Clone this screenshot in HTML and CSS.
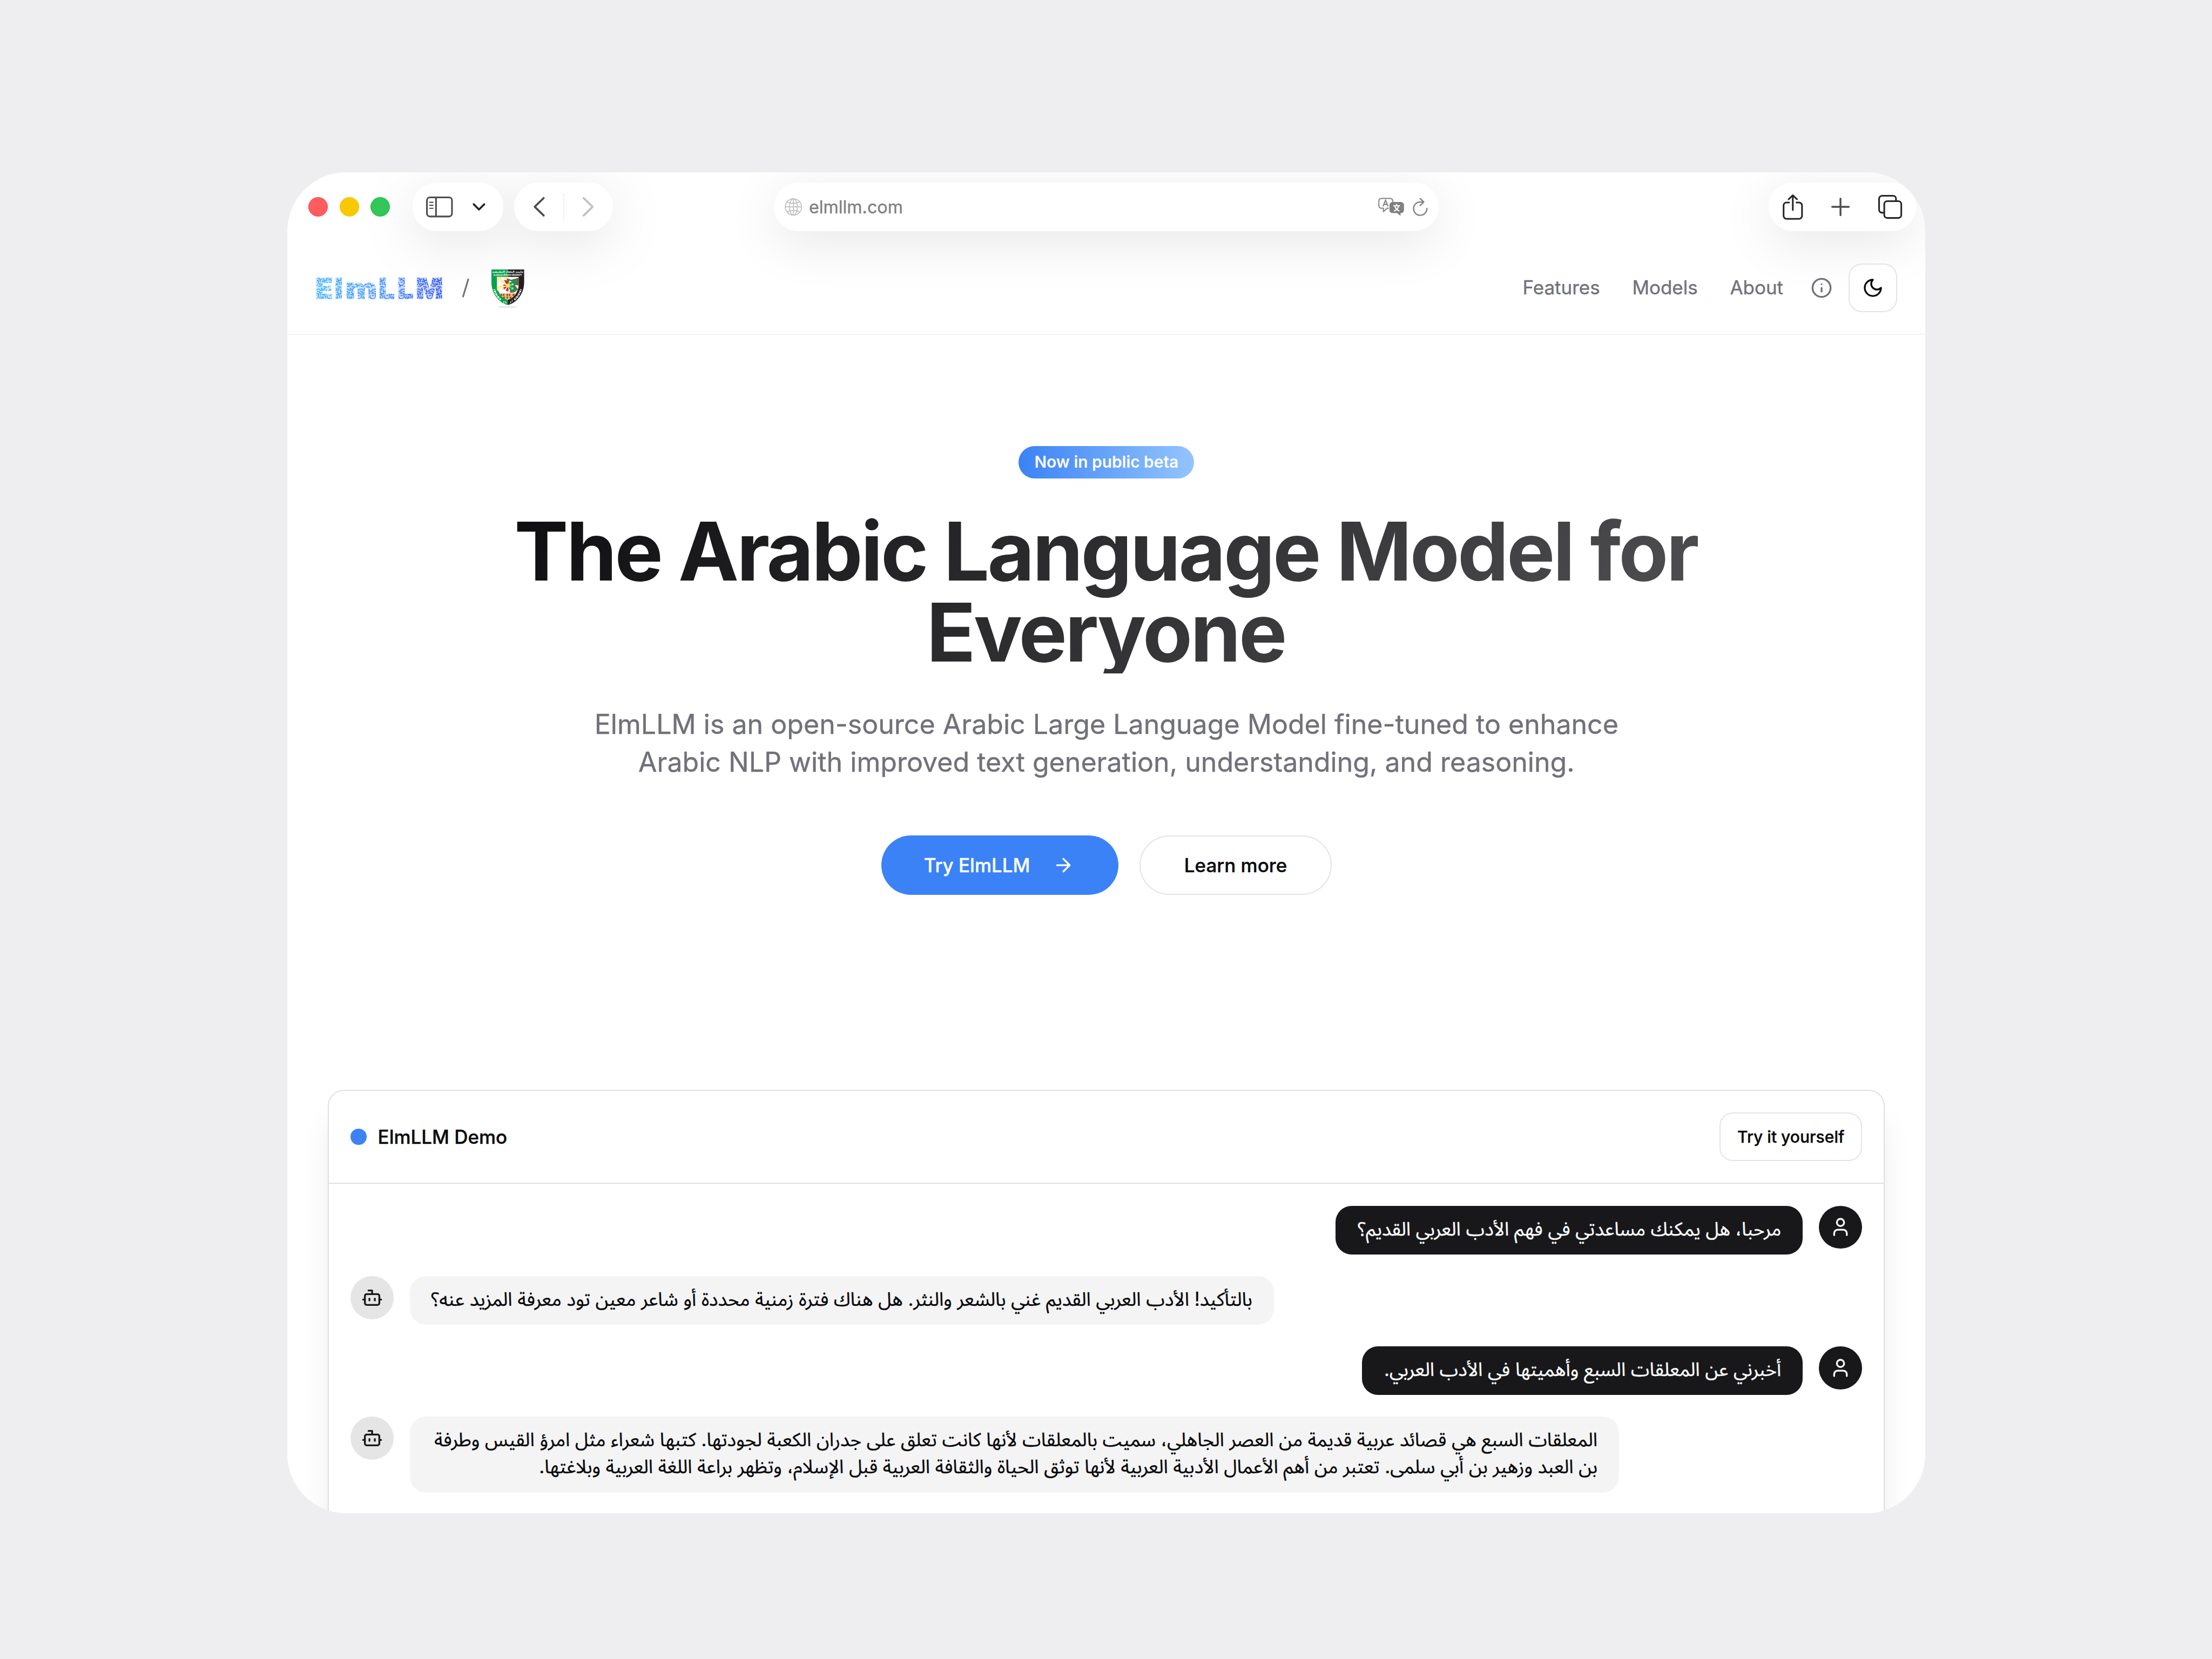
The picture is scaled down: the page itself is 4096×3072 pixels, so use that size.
FILE: index.html
```html
<!DOCTYPE html>
<html lang="en">
<head>
<meta charset="utf-8">
<title>ElmLLM</title>
<link rel="stylesheet" href="styles.css">
</head>
<body>
<svg class="defs" aria-hidden="true">
  <symbol id="bot" viewBox="0 0 24 24"><path d="M12 8V4H8"/><rect x="4" y="8" width="16" height="12" rx="2"/><path d="M2 14h2M20 14h2M15 13v2M9 13v2"/></symbol>
  <symbol id="user" viewBox="0 0 24 24"><path d="M19 21v-2a4 4 0 0 0-4-4H9a4 4 0 0 0-4 4v2"/><circle cx="12" cy="7" r="4"/></symbol>
</svg>
<div class="window">
  <div class="toolbar">
    <div class="lights"><i class="light red"></i><i class="light yellow"></i><i class="light green"></i></div>
    <div class="pills">
      <div class="pill pill-sidebar">
        <svg class="i-sidebar" viewBox="0 0 58 45"><g fill="none" stroke="#4c4c4c" stroke-width="3.6"><rect x="1.8" y="1.8" width="54.4" height="41.4" rx="6.5"/><path d="M21.5 2v41"/></g><path d="M8 12.500h7M8 19h7M8 25.500h7" stroke="#4c4c4c" stroke-width="2.600" stroke-linecap="round"/></svg>
        <svg class="i-chevron" viewBox="0 0 28 17"><path d="M2.500 2.500 14 14 25.500 2.500" fill="none" stroke="#262626" stroke-width="4.200" stroke-linecap="round" stroke-linejoin="round"/></svg>
      </div>
      <div class="pill pill-nav">
        <svg class="i-arrow" viewBox="0 0 24 42"><path d="M22 2 2.500 21 22 40" fill="none" stroke="#4c4c4c" stroke-width="4.300" stroke-linecap="round" stroke-linejoin="round"/></svg>
        <i class="divider"></i>
        <svg class="i-arrow" viewBox="0 0 24 42"><path d="M2 2 21.500 21 2 40" fill="none" stroke="#bfbfbf" stroke-width="4.300" stroke-linecap="round" stroke-linejoin="round"/></svg>
      </div>
    </div>
    <div class="pill url">
      <svg class="i-globe" viewBox="0 0 38 38"><g fill="none" stroke="#bfbfbf" stroke-width="2"><circle cx="19" cy="19" r="17.800"/><ellipse cx="19" cy="19" rx="8.500" ry="17.800"/><path d="M19 1v36M1 19h36M5 8c8 4.500 20 4.500 28 0M5 30c8-4.500 20-4.500 28 0"/></g></svg>
      <span class="host">elmllm.com</span>
      <svg class="i-translate" viewBox="0 0 58 41"><path d="M7 1.500h19a5.500 5.500 0 0 1 5.500 5.500v3M23 23h-3.500l-8 7v-7H7A5.500 5.500 0 0 1 1.500 17.500V7A5.500 5.500 0 0 1 7 1.500" fill="none" stroke="#8e8e8e" stroke-width="2.600"/><path d="M10.500 19 16 5.500 21.500 19M12.500 14.500h7" fill="none" stroke="#808080" stroke-width="2.400"/><path d="M31 9.500h18.500a6.500 6.500 0 0 1 6.500 6.500v11a6.500 6.500 0 0 1-6.500 6.500H48.500v6.200l-7.500-6.200h-10a6.500 6.500 0 0 1-6.500-6.500V16a6.500 6.500 0 0 1 6.500-6.500z" fill="#808080"/><path d="M33 17.500h14.500M40 13.500v4M36 18c1.500 5 5 9 10 11M44.500 18c-1.500 5-5 9-10 11" fill="none" stroke="#fff" stroke-width="2.400"/></svg>
      <svg class="i-reload" viewBox="0 0 33 41"><path d="M30.800 23.500A14.500 14.500 0 1 1 16.500 9.300h6" fill="none" stroke="#808080" stroke-width="2.800" stroke-linecap="round"/><path d="M16 2l8 7.500-8 7.500" fill="none" stroke="#808080" stroke-width="2.800" stroke-linecap="round" stroke-linejoin="round"/></svg>
    </div>
    <div class="pill actions">
      <svg class="i-share" viewBox="0 0 44 55"><path d="M14 17.500H8.500A6.500 6.500 0 0 0 2 24v22.500A6.500 6.500 0 0 0 8.500 53h27a6.500 6.500 0 0 0 6.500-6.500V24a6.500 6.500 0 0 0-6.500-6.500H30M22 34V2.500M13 10.500l9-8.500 9 8.500" fill="none" stroke="#262626" stroke-width="3.600" stroke-linecap="round" stroke-linejoin="round"/></svg>
      <svg class="i-plus" viewBox="0 0 40 40"><path d="M20 2v36M2 20h36" fill="none" stroke="#4c4c4c" stroke-width="4" stroke-linecap="round"/></svg>
      <svg class="i-tabs" viewBox="0 0 52 52"><g fill="none" stroke="#262626" stroke-width="3.600"><rect x="13" y="13.500" width="37" height="36.500" rx="6.500"/><path d="M12.500 38.500H8A6.200 6.200 0 0 1 1.800 32.300V8.300A6.500 6.500 0 0 1 8.300 1.800h24A6.200 6.200 0 0 1 38.500 8v5"/></g></svg>
    </div>
  </div>

  <header class="site-header">
    <svg class="logo" viewBox="0 0 280 60">
      <defs>
        <linearGradient id="ink" gradientUnits="userSpaceOnUse" x1="0" y1="0" x2="280" y2="0"><stop offset="0" stop-color="#38adff"/><stop offset=".5" stop-color="#3688f8"/><stop offset="1" stop-color="#2448fb"/></linearGradient>
        <pattern id="maze" width="31" height="29" patternUnits="userSpaceOnUse"><rect width="31" height="29" fill="#3c3c3c"/><path d="M0 3h5l3 3h5M10 0v3h6l2-3M0 8h4l3 4v5M12 9l4 4h5M20 3v5h5l3-4h3M24 12h7M28 8v4M10 15h5l3 3v5M0 13h3v6l4 4M22 16v5l4 3h5M26 17h5M2 26h6l3-4h4M13 27h6l3 2M25 28v-3M10 20l-3 0M15 5v3M0 22h2M9 9v3M21 10v4M13 18v5" fill="none" stroke="#fff" stroke-width="2.200"/></pattern>
        <mask id="weave" maskUnits="userSpaceOnUse" x="-10" y="0" width="300" height="60"><rect x="-10" width="300" height="60" fill="url(#maze)"/></mask>
      </defs>
      <g mask="url(#weave)"><text class="logo-text" y="53" fill="url(#ink)" stroke="url(#ink)" stroke-width="1.500"><tspan x="-3.500">E</tspan><tspan x="38">l</tspan><tspan x="61.500" textLength="69" lengthAdjust="spacingAndGlyphs">m</tspan><tspan x="133.500">L</tspan><tspan x="174.500">L</tspan><tspan x="214.500">M</tspan></text></g>
    </svg>
    <svg class="slash" viewBox="0 0 17 43"><path d="M14.500 1.500 2.500 41.500" stroke="#71717a" stroke-width="3.600"/></svg>
    <svg class="crest" viewBox="0 0 71 84">
      <path d="M0 0h35.500v77C14 72 0 50 0 28z" fill="#0aa24e"/><path d="M35.500 0H71v28c0 22-14 44-35.500 49z" fill="#231f20"/>
      <path d="M12 16h47v18c0 14-10 27-23.500 32C22 61 12 48 12 34z" fill="#fff"/>
      <path d="M35 36 12 22v-6h7zM35 36l-9-20h8zM35 36 12 34v12z" fill="#fff3a3"/>
      <path d="M17 52h37c-4 6-10 11-18.500 14C27 63 21 59 17 52z" fill="#f2b277"/>
      <path d="M20 53h3v4h-3zM25 53h3v4h-3zM33 53h3v4h-3zM38 53h3v4h-3zM46 53h4v4h-4zM26 59h3v4h-3zM33 59h3v4h-3zM40 59h3v4h-3z" fill="#8b4a20"/>
      <path d="M34 20l9 3 15-4v15l-9-1 8 10-7 6-8 1-6-6z" fill="#16994a" stroke="#d8232a" stroke-width="1.200"/>
      <path d="M35 36 27 23l7 1 3 9zM35 36l-10-1 2-3zM35 36l-8 8-1-5zM35 36l2 12-6-2z" fill="#e01f2d"/>
      <path d="M37 34l2-10 5 2zM38 35l9-5 1 4zM38 36l10 4-3 4zM37 38l4 9-4 1z" fill="#fff"/>
      <path d="M39 34l1-7 2 1zM40 35l6-3v1zM40 37l6 3-2 2z" fill="#16994a"/>
      <circle cx="36" cy="35" r="4.500" fill="#ffe24a"/>
      <text class="crest-ar" x="35.500" y="6.500">جامعة البلقاء التطبيقية</text>
      <text class="crest-en" x="35.500" y="14.500" textLength="62" lengthAdjust="spacingAndGlyphs">AL-BALQA APPLIED UNIVERSITY</text>
      <path d="M6 43c3 10 8 18 15 23M64 43c-3 10-8 18-15 23" fill="none" stroke="#fff" stroke-width="4" stroke-dasharray="1.500 1.500 3 1"/>
      <path d="M27 68v6M31 69c-1 3 0 5 2 3M40 73c2 0 3-3 1-4M45 70v-4" stroke="#fff" stroke-width="1.300" fill="none"/>
      <path d="M17 81.500h37" stroke="#bdbdbd" stroke-width="2.500" stroke-dasharray="1.500 1 1.500 1 1.500 2"/>
    </svg>
    <nav class="nav">
      <a>Features</a><a>Models</a><a>About</a>
      <svg class="icon info" viewBox="0 0 24 24"><circle cx="12" cy="12" r="10"/><path d="M12 16v-4M12 8h.01"/></svg>
      <button class="theme"><svg class="icon" viewBox="0 0 24 24"><path d="M12 3a6 6 0 0 0 9 9 9 9 0 1 1-9-9Z"/></svg></button>
    </nav>
  </header>

  <section class="hero">
    <span class="badge">Now in public beta</span>
    <h1>The Arabic Language Model for<br>Everyone</h1>
    <p>ElmLLM is an open-source Arabic Large Language Model fine-tuned to enhance<br>Arabic NLP with improved text generation, understanding, and reasoning.</p>
    <div class="cta">
      <button class="btn primary">Try ElmLLM<svg class="icon" viewBox="0 0 24 24"><path d="M5 12h14M12 5l7 7-7 7"/></svg></button>
      <button class="btn outline">Learn more</button>
    </div>
  </section>

  <section class="demo">
    <div class="demo-head"><i class="dot"></i><span class="demo-title">ElmLLM Demo</span><button class="try">Try it yourself</button></div>
    <div class="chat">
      <div class="row from-user"><div class="bubble b1" dir="rtl"><span>مرحبا، هل يمكنك مساعدتي في فهم الأدب العربي القديم؟</span></div><div class="avatar"><svg class="icon"><use href="#user"/></svg></div></div>
      <div class="row from-bot"><div class="avatar"><svg class="icon"><use href="#bot"/></svg></div><div class="bubble b2" dir="rtl"><span>بالتأكيد! الأدب العربي القديم غني بالشعر والنثر. هل هناك فترة زمنية محددة أو شاعر معين تود معرفة المزيد عنه؟</span></div></div>
      <div class="row from-user"><div class="bubble b3" dir="rtl"><span>أخبرني عن المعلقات السبع وأهميتها في الأدب العربي.</span></div><div class="avatar"><svg class="icon"><use href="#user"/></svg></div></div>
      <div class="row from-bot"><div class="avatar"><svg class="icon"><use href="#bot"/></svg></div><div class="bubble b4" dir="rtl"><span>المعلقات السبع هي قصائد عربية قديمة من العصر الجاهلي، سميت بالمعلقات لأنها كانت تعلق على جدران الكعبة لجودتها. كتبها شعراء مثل امرؤ القيس وطرفة</span><span>بن العبد وزهير بن أبي سلمى. تعتبر من أهم الأعمال الأدبية العربية لأنها توثق الحياة والثقافة العربية قبل الإسلام، وتظهر براعة اللغة العربية وبلاغتها.</span></div></div>
    </div>
  </section>
</div>
</body>
</html>
```
FILE: styles.css
```css
/* 1rem = 100 design pixels on the 4800 x 3600 artboard */
html { font-size: 85.3333px; }
* { box-sizing: border-box; margin: 0; padding: 0; }
body {
  width: 48rem; height: 36rem; overflow: hidden;
  padding: 3.74rem 6.22rem 0 6.24rem;
  background: #eeeef0; color: #09090b;
  font-family: Inter, "Noto Sans Arabic", "Noto Sans", "DejaVu Sans", sans-serif;
  font-size: .41rem; line-height: .587rem;
  -webkit-text-stroke: .0045rem;
}
svg { display: block; flex: none; overflow: visible; }
i { display: block; flex: none; }
button { font: inherit; color: inherit; background: #fff; border: 0; display: flex; align-items: center; justify-content: center; }
.defs { display: none; }
.window { height: 29.1rem; border-radius: 1.28rem; background: #fff; overflow: hidden; }

.toolbar { display: flex; align-items: flex-start; height: 1.5rem; padding: .22rem .2rem 0 .455rem; }
.lights { display: flex; gap: .255rem; height: 1.06rem; align-items: center; margin-right: .49rem; }
.light { width: .42rem; height: .42rem; border-radius: 50%; }
.red { background: #ff5c60; border: .02rem solid #fb3f52; }
.yellow { background: #fac800; border: .02rem solid #f2c010; }
.green { background: #34c759; border: .02rem solid #16c141; }
.pills { display: flex; gap: .24rem; filter: drop-shadow(0 .24rem .56rem rgba(0,0,0,.1)); }
.pill { height: 1.06rem; border-radius: .53rem; background: #fff; display: flex; align-items: center; flex: none; }
.pill-sidebar { width: 1.965rem; padding-left: .295rem; gap: .42rem; }
.i-sidebar { width: .58rem; height: .45rem; }
.i-chevron { width: .28rem; height: .17rem; }
.pill-nav { width: 2.145rem; padding: 0 .42rem; justify-content: space-between; }
.i-arrow { width: .24rem; height: .42rem; }
.divider { width: .025rem; height: .58rem; background: #f0f0f0; }
.url, .actions { box-shadow: 0 .24rem 1.12rem rgba(0,0,0,.1); }
.url { width: 14.43rem; margin-left: 3.485rem; padding: 0 .23rem 0 .24rem; }
.i-globe { width: .38rem; height: .38rem; }
.host { margin-left: .145rem; padding-top: .015rem; font-size: .378rem; color: #808080; }
.i-translate { width: .58rem; height: .41rem; margin-left: auto; }
.i-reload { width: .33rem; height: .41rem; margin-left: .17rem; }
.actions { width: 3.2rem; margin-left: auto; padding: 0 .3rem; justify-content: space-between; }
.i-share { width: .44rem; height: .55rem; }
.i-plus { width: .4rem; height: .4rem; }
.i-tabs { width: .52rem; height: .52rem; }

.site-header { display: flex; align-items: center; height: 2.03rem; padding: 0 .61rem 0 .64rem; border-bottom: .03rem solid #f3f3f4; }
.logo { width: 2.8rem; height: .6rem; margin-top: .01rem; }
.logo-text { font: 900 62px Inter, sans-serif; }
.slash { width: .17rem; height: .43rem; margin-left: .34rem; margin-top: .02rem; }
.crest { width: .71rem; height: .84rem; margin-left: .475rem; margin-top: .06rem; }
.crest-ar, .crest-en { fill: #fff; text-anchor: middle; font: 700 6px "DejaVu Sans", sans-serif; }
.crest-en { font: 700 7px "Liberation Sans", sans-serif; }
.nav { margin-left: auto; display: flex; align-items: center; gap: .7rem; color: #71717a; }
.nav a { margin-top: -.02rem; }
.icon { width: .47rem; height: .47rem; fill: none; stroke: currentColor; stroke-width: 2; stroke-linecap: round; stroke-linejoin: round; }
.info { margin-left: -.1rem; margin-right: -.35rem; }
.theme { width: 1.055rem; height: 1.055rem; border: .029rem solid #e4e4e7; border-radius: .29rem; color: #09090b; }

.hero { display: flex; flex-direction: column; align-items: center; padding-top: 2.41rem; height: 16.38rem; }
.badge { height: .705rem; width: 3.81rem; text-align: center; border-radius: .36rem; line-height: .7rem; font-size: .35rem; font-weight: 600; color: #fff; background: linear-gradient(90deg, #3b82f6, #93c5fd); -webkit-text-stroke: 0; }
h1 {
  width: 26.4rem; margin: .705rem .03rem 0 0; text-align: center; white-space: nowrap;
  font-size: 1.76rem; line-height: 1.76rem; font-weight: 700; letter-spacing: -.025em;
  background: linear-gradient(135deg, #0d0d0f, #535355); -webkit-background-clip: text; background-clip: text; color: transparent;
  -webkit-text-stroke: 0;
}
p { margin-top: .69rem; font-size: .587rem; line-height: .82rem; color: #71717a; text-align: center; white-space: nowrap; }
.cta { display: flex; gap: .46rem; margin-top: 1.185rem; font-weight: 500; }
.btn { height: 1.29rem; border-radius: .65rem; }
.primary { width: 5.145rem; padding-right: .03rem; background: #3b82f6; color: #fff; gap: .49rem; }
.outline { width: 4.17rem; border: .029rem solid #e4e4e7; }

.demo { margin: 0 .88rem 0 .875rem; height: 12rem; border: .029rem solid #e0e0e3; border-radius: .35rem; background: #fff; box-shadow: 0 .59rem .73rem -.15rem rgba(0,0,0,.1), 0 .23rem .29rem -.18rem rgba(0,0,0,.1); }
.demo-head { display: flex; align-items: center; height: 2.02rem; padding: 0 .47rem; border-bottom: .029rem solid #e0e0e3; }
.dot { width: .35rem; height: .35rem; border-radius: 50%; background: #3b82f6; }
.demo-title { margin-left: .24rem; font-weight: 500; }
.try { margin-left: auto; width: 3.09rem; height: 1.055rem; border: .029rem solid #e4e4e7; border-radius: .29rem; font-size: .352rem; font-weight: 500; }
.chat { display: flex; flex-direction: column; gap: .47rem; padding: .47rem; }
.row { display: flex; gap: .352rem; align-items: flex-start; }
.from-user { justify-content: flex-end; }
.avatar { flex: none; width: .935rem; height: .935rem; border-radius: 50%; display: flex; align-items: center; justify-content: center; background: #e5e5e6; color: #18181b; }
.bubble { border-radius: .35rem; padding: .2rem .47rem .27rem; background: #f4f4f5; font-size: .4072rem; }
.bubble span { display: block; white-space: nowrap; height: .587rem; }
.from-user .avatar, .from-user .bubble { background: #18181b; color: #fafafa; }
.b1 { width: 10.14rem; }
.b2 { width: 18.75rem; }
.b3 { width: 9.56rem; }
.b4 { width: 26.24rem; }
```
